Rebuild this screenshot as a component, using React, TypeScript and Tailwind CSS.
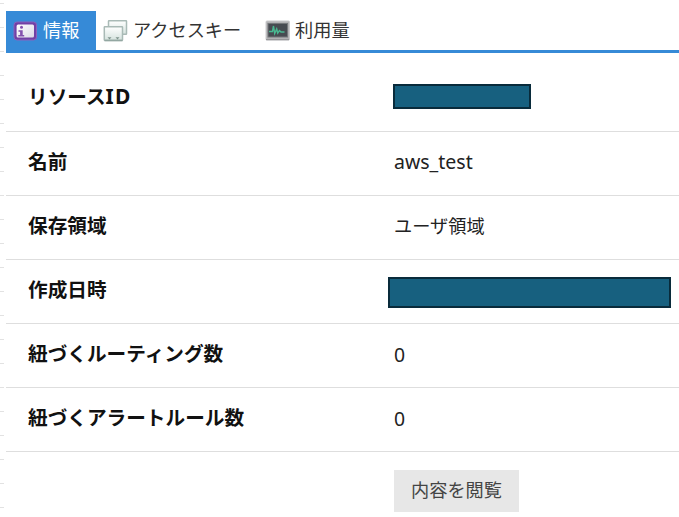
import type { ReactNode } from "react";

const InfoIcon = () => (
  <svg width="25" height="20" viewBox="0 0 25 20">
    <defs>
      <linearGradient id="info-fill" x1="0" y1="0" x2="1" y2="1">
        <stop offset="0" stopColor="#ffffff" />
        <stop offset="1" stopColor="#dcd9e6" />
      </linearGradient>
    </defs>
    <rect x="1" y="1" width="22.5" height="18" rx="3" fill="#7140a5" stroke="#8a61bd" />
    <rect x="3.6" y="3.6" width="17.4" height="12.8" rx="1.5" fill="url(#info-fill)" />
    <circle cx="8.5" cy="6.3" r="1.5" fill="#8450ae" />
    <path d="M5.5 9.2h4.2v4.8h1.5v1.6H5.3V14h1.8v-3.2H5.5z" fill="#8450ae" />
  </svg>
);

const CardsIcon = () => (
  <svg width="26" height="24" viewBox="0 0 26 24">
    <defs>
      <linearGradient id="card-fill" x1="0" y1="0" x2="0" y2="1">
        <stop offset="0" stopColor="#ffffff" />
        <stop offset="1" stopColor="#d5e3de" />
      </linearGradient>
    </defs>
    <rect x="5.5" y="1.8" width="18" height="13.5" rx="0.5" fill="url(#card-fill)" stroke="#a9bab6" strokeWidth="1.5" />
    <rect x="1.3" y="7.8" width="18.2" height="13.5" rx="0.5" fill="url(#card-fill)" stroke="#a9bab6" strokeWidth="1.5" />
    <path d="M1.5 21.6h18" stroke="#93a7a2" strokeWidth="1.5" />
    <path d="M4.5 18.2h4l-2 2.3zM12.5 18.2h4l-2 2.3z" fill="#80968f" />
  </svg>
);

const MonitorIcon = () => (
  <svg width="26" height="21" viewBox="0 0 26 21">
    <rect x="1" y="1" width="23.5" height="19" rx="1" fill="#b2b2b4" stroke="#cacacc" />
    <path d="M1 19.7h23" stroke="#8d8d90" />
    <rect x="3" y="3.5" width="19.5" height="13.5" fill="#474b51" stroke="#74777a" />
    <path d="M4 11.5h3.5l1-5.5 1.2 7.5 2-4.5 1 4 1.8-2.5 1.5 1.5h3.5" fill="none" stroke="#49b891" strokeWidth="1.4" />
  </svg>
);

const Redacted = ({ wide = false }: { wide?: boolean }) => (
  <div
    className={
      wide
        ? "-ml-[6px] mt-[5px] h-[31px] w-[283px] border-2 border-[#092b3b] bg-[#17607f]"
        : "-ml-px mb-[2px] h-[25px] w-[138px] border-2 border-[#092b3b] bg-[#17607f]"
    }
  />
);

const rows: { label: ReactNode; value: ReactNode }[] = [
  {
    label: <span className="block pb-[2px]">リソース<span className="text-[21px] leading-none tracking-[1.2px]">ID</span></span>,
    value: <Redacted />,
  },
  { label: "名前", value: <span className="text-[19.5px]">aws_test</span> },
  { label: "保存領域", value: "ユーザ領域" },
  { label: "作成日時", value: <Redacted wide /> },
  { label: "紐づくルーティング数", value: <span className="block pt-[2px] text-[19.4px]">0</span> },
  { label: "紐づくアラートルール数", value: <span className="block pt-[2px] text-[19.4px]">0</span> },
];

export default function App() {
  return (
    <div className="flex h-[517px] w-[679px] overflow-hidden bg-white font-['Noto_Sans','Noto_Sans_CJK_JP',sans-serif] text-[18.2px] leading-[28px] text-[#222]">
      <div className="w-[4px] shrink-0 pt-[3px]">
        {Array.from({ length: 22 }, (_, i) => (
          <div key={i} className="h-[24px] border-t border-[#e2e2e2]" />
        ))}
      </div>
      <main className="ml-[2px] min-w-0 flex-1 pt-[11px]">
        <nav className="flex h-[42px] border-b-[3px] border-[#368ad7] text-[#333]">
          <div className="flex w-[90px] items-center gap-[5px] bg-[#368ad7] pl-[7px] text-white">
            <InfoIcon />
            <span className="whitespace-nowrap pb-[2px]">情報</span>
          </div>
          <div className="flex w-[162px] items-center gap-[4px] pl-[7px]">
            <CardsIcon />
            <span className="whitespace-nowrap pb-[2px]">アクセスキー</span>
          </div>
          <div className="flex items-center gap-[4px] pl-[7px]">
            <MonitorIcon />
            <span className="whitespace-nowrap pb-[2px]">利用量</span>
          </div>
        </nav>
        <dl className="pt-[15px]">
          {rows.map((row, i) => (
            <div key={i} className="flex h-[64px] items-center border-b border-[#dedede] pl-[22px]">
              <dt className="w-[366px] shrink-0 whitespace-nowrap pb-[3px] text-[19.65px] font-bold text-[#111]">{row.label}</dt>
              <dd className="pb-[4px]">{row.value}</dd>
            </div>
          ))}
        </dl>
        <button className="ml-[388px] mt-[18px] flex h-[42px] w-[125px] items-center justify-center bg-[#e7e7e7] pb-[3px] text-[#444]">
          内容を閲覧
        </button>
      </main>
    </div>
  );
}
